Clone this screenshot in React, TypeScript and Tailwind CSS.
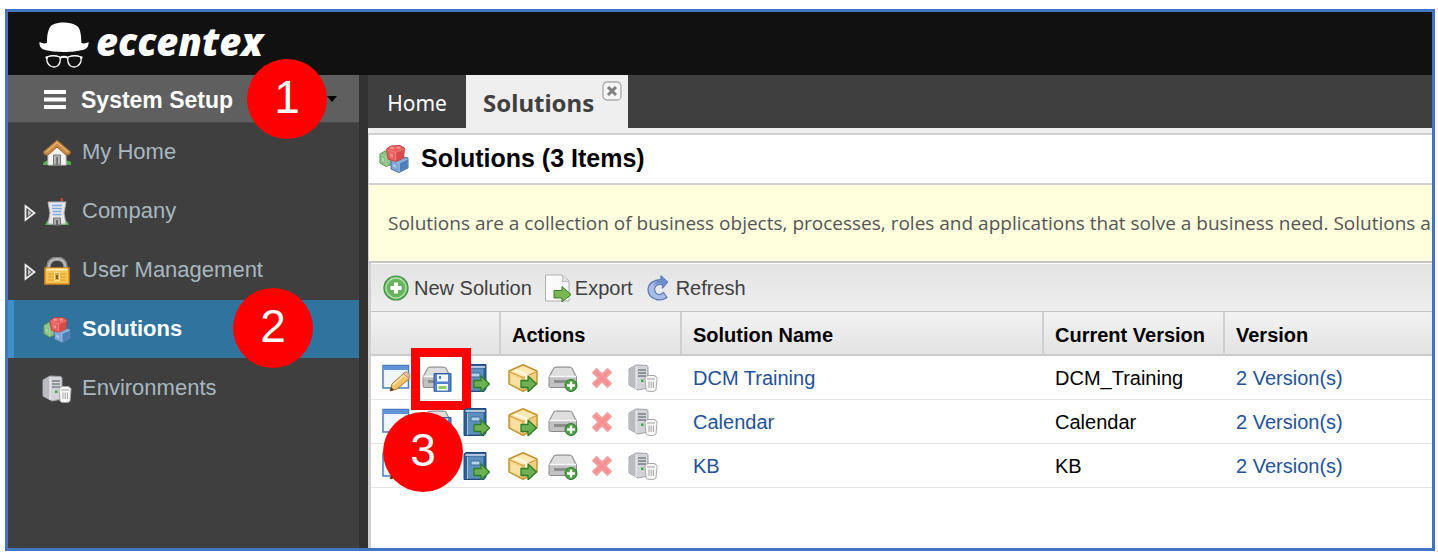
import type { ReactNode } from 'react'

interface IconProps {
  className?: string
}

function HatLogo() {
  return (
    <svg viewBox="0 0 50 48" className="h-12 w-[50px] shrink-0" aria-hidden="true">
      <path
        fill="#fff"
        d="M8 21C8 13 9 6 13 3C17 1 21 .5 25 .5S34 1 38 4C42 7 42 14 42.500 21C45 22 48 21 49.500 20C50 24 48 27 44 28C38 29 33 30 25 30S11 29 6 28C2 27 0 24 .5 20C3 21 5 22 8 21Z"
      />
      <g fill="none" stroke="#fff" strokeWidth="1.300">
        <path d="M8 35Q14 32.500 21 35Q22 41 18.500 44Q15 46 11.500 44Q7 41 8 35Z" />
        <path d="M29 35Q36 32.500 42 35Q43 41 38.500 44Q35 46 31.500 44Q28 41 29 35Z" />
        <path d="M21 36Q25 33.500 29 36M9 35.500H6.500M41 35.500H43.500" strokeWidth="2" />
      </g>
    </svg>
  )
}

function HomeIcon() {
  return (
    <svg viewBox="0 0 28 28" className="size-7 shrink-0" aria-hidden="true">
      <path d="M0 24Q4 20 9 22L10 26H0ZM18 23Q24 20 28 23V26H18Z" fill="#55ad50" />
      <path d="M5 14L14 5L23 14V26H5Z" fill="#f4f4f4" stroke="#c9c9c9" />
      <path d="M14 1L0 13L2 16L5 16L14 8L23 16H26L28 13Z" fill="#c98a45" stroke="#945f2b" />
      <path d="M3 13L14 3.500L25 13" fill="none" stroke="#e3b06e" strokeWidth="1.500" />
      <path d="M10.500 16H17.500V26H10.500Z" fill="#b3b3b3" stroke="#777" />
      <path d="M13 18H15V26H13Z" fill="#777" />
    </svg>
  )
}

function CompanyIcon() {
  return (
    <svg viewBox="0 0 28 28" className="size-7 shrink-0" aria-hidden="true">
      <path d="M2 27Q4 21 8 22L20 22Q25 22 26 27Z" fill="#55ad50" />
      <path d="M5 4H23L21 15L23 26H5L7 15Z" fill="#e8e8ea" stroke="#aeb0b6" />
      <path d="M9 7.500H19M9 10.500H19M9.500 13.500H18.500M9.500 16.500H18.500" stroke="#7fa7e8" strokeWidth="1.500" />
      <path d="M10.500 20H17.500V27H10.500Z" fill="#aaa" stroke="#777" />
      <path d="M13 22H15V27H13Z" fill="#666" />
      <path d="M18.500 4V1" stroke="#999" />
      <path d="M17.500 0H20V3H17.500Z" fill="#d63a35" />
    </svg>
  )
}

function LockIcon() {
  return (
    <svg viewBox="0 0 28 28" className="size-7 shrink-0" aria-hidden="true">
      <path d="M5.500 13V10Q6 2 14 1.500Q22 2 22.500 10V13" fill="none" stroke="#858585" strokeWidth="4.500" />
      <path d="M5.500 12V10Q6 2.500 14 2Q22 2.500 22.500 10V12" fill="none" stroke="#bcbcbc" strokeWidth="1.800" />
      <path d="M2 11H26V27H2Z" fill="#f8c554" stroke="#d98a1c" strokeWidth="1.500" />
      <path d="M3.500 12.500H24.500" stroke="#fff0b8" strokeWidth="2" />
      <path d="M5 17H11M17 17H23M5 20H11M17 20H23M5 23H11M17 23H23" stroke="#e09a28" />
      <path d="M11.500 15.500H16.500V23.500H11.500Z" fill="#e7a73a" stroke="#fbe29a" />
      <path d="M13 18H15V22H13Z" fill="#8a5b14" />
    </svg>
  )
}

function CubesIcon({ className }: IconProps) {
  return (
    <svg viewBox="0 0 30 30" className={className} aria-hidden="true">
      <path d="M1 10L6 7L14 9V20L7 22.500L1 19Z" fill="#8cc084" stroke="#5d9a58" strokeLinejoin="round" />
      <path d="M1.500 10.500L7 12.500V22" fill="none" stroke="#b4d8ae" strokeWidth=".8" />
      <path d="M3 13.500L5 14.500V18L3 17Z" fill="#b5d9b0" />
      <path d="M12 15L20 12L29 14V24L20 28.500L12 25Z" fill="#7ea6d6" stroke="#47709f" strokeLinejoin="round" />
      <path d="M20.500 19L28.500 15.500V23.500L20.500 27.800Z" fill="#4f7fb7" />
      <path d="M12.500 16L20 19L28.500 15M20.300 19V28" fill="none" stroke="#a3c1e5" strokeWidth=".8" />
      <path d="M14 20L17 21.500V24L14 22.500Z" fill="#a9c7ea" />
      <path d="M7.500 5L12 2L21 1.500L25.500 4L24.500 14L17 17.500L9 15Z" fill="#e8605f" stroke="#c4403f" strokeLinejoin="round" />
      <path d="M17 8L25 5L24 13.500L17 17Z" fill="#da4a4c" />
      <path d="M8.500 6L16.500 8.500L25 5M16.700 8.500V16.500" fill="none" stroke="#f08683" strokeWidth=".8" />
      <ellipse cx="13" cy="4" rx="2.500" ry="1.300" fill="#f58e8b" />
      <ellipse cx="19.500" cy="3.800" rx="2.500" ry="1.300" fill="#f58e8b" />
      <path d="M11 9.500L14 10.500V13.500L11.500 12.500Z" fill="#f49491" />
    </svg>
  )
}

function ServerIcon() {
  return (
    <svg viewBox="0 0 30 28" className="h-7 w-[30px] max-w-none shrink-0" aria-hidden="true">
      <path d="M1 5L8 1L19 1.500L20 3V24L10 26L1 21Z" fill="#d3d4d7" stroke="#a0a2a6" />
      <path d="M1.500 5.500L8 2L8 24.500L1.500 21Z" fill="#b9bbc0" />
      <path d="M8 2.500V25" stroke="#f3f3f3" />
      <path d="M10 6H18M10 9H18M10 12H18" stroke="#7c8089" strokeWidth="1.500" />
      <path d="M13 15.500H15.500V18H13Z" fill="#3fa447" />
      <path d="M17 14Q17 12.500 19 12.500V11.500H27V12.500Q29.500 12.500 29 14.500L28 26Q27.500 27.500 23 27.500T18 26Z" fill="#f7f7f7" stroke="#a8a8a8" />
      <path d="M19 15H27M21 17.500V24M23.200 17.500V24M25.400 17.500V24" stroke="#a3a3a3" />
    </svg>
  )
}

function ArrowBadge() {
  return (
    <path
      d="M12 16.500H19V12L27.500 20L19 28V23.500H12Z"
      fill="#6db052"
      stroke="#2f7d2c"
      strokeWidth="1.300"
      strokeLinejoin="round"
    />
  )
}

function EditIcon() {
  return (
    <svg viewBox="0 0 28 28" className="size-7" aria-hidden="true">
      <path d="M1 1.500H26.500V24H1Z" fill="#eaf3fd" stroke="#4c7cc0" strokeWidth="1.500" />
      <path d="M1.500 2H26V6H1.500Z" fill="#5f93d8" />
      <path d="M3 8H25V22.500H3Z" fill="#f0f7ff" />
      <path d="M8 27L10 20L22 9L27 12V15L15 25Z" fill="#f2c468" stroke="#a8762c" />
      <path d="M11 21L22 11L25 14" fill="none" stroke="#fde8b0" strokeWidth="1.500" />
      <path d="M21 9.500L24 7.500L28 11L26 14Z" fill="#e9b9a5" stroke="#b98567" strokeWidth=".8" />
      <path d="M8 27L9 23L12 26Z" fill="#4d3820" />
    </svg>
  )
}

function Drive({ children }: { children: ReactNode }) {
  return (
    <svg viewBox="0 0 30 28" className="h-7 w-[30px] max-w-none" aria-hidden="true">
      <path d="M6 3.500Q7 3 9 3H20Q23 3 24 4L28.500 13V22Q28.500 23.500 27 23.500H2.500Q1 23.500 1 22V13Z" fill="#c2c2c2" stroke="#8b8b8b" />
      <path d="M7 4H23L26.500 12H2.500Z" fill="#dedede" />
      <path d="M1.500 12.500H28" stroke="#f6f6f6" strokeWidth="1.500" />
      <path d="M6 16H23V19H6Z" fill="#8e8e8e" />
      {children}
    </svg>
  )
}

function SaveDriveIcon() {
  return (
    <Drive>
      <path d="M12 9.500H29V27.300H12Z" fill="#4f83cf" stroke="#2f5ca4" />
      <path d="M15 10.500H26V17.500H15Z" fill="#f4f8ff" />
      <path d="M17 12H19V15H17Z" fill="#4f83cf" />
      <path d="M15 20H26V26.500H15Z" fill="#fff" />
      <path d="M16.500 22H24.500V25H16.500Z" fill="#8bd05c" />
    </Drive>
  )
}

function AddDriveIcon() {
  return (
    <Drive>
      <circle cx="23" cy="21.500" r="6" fill="#4ba046" stroke="#2e7c2c" />
      <path d="M23 17.500V25.500M19 21.500H27" stroke="#fff" strokeWidth="2.400" />
    </Drive>
  )
}

function BookIcon() {
  return (
    <svg viewBox="0 0 28 28" className="size-7" aria-hidden="true">
      <path d="M2 2L4 .5H24V25L22 27.500H2Z" fill="#2f5f95" stroke="#234a78" />
      <path d="M5 4.500H21.500V26.500H5Z" fill="#5d90bd" />
      <path d="M3.500 3H23" stroke="#dbe8f3" strokeWidth="1.500" />
      <path d="M5.500 5V27" stroke="#9ec1dd" />
      <path d="M9 9H18V13H9Z" fill="#b6d3e8" stroke="#3d6d9f" />
      <ArrowBadge />
    </svg>
  )
}

function PackageIcon() {
  return (
    <svg viewBox="0 0 30 28" className="h-7 w-[30px] max-w-none" aria-hidden="true">
      <path d="M1 7L15 .7L29 7V20L15 27.300L1 20Z" fill="#f3cf80" stroke="#c48f2c" strokeWidth="1.400" strokeLinejoin="round" />
      <path d="M2.500 7.500L15 2.200L27.500 7.500L15 13Z" fill="#fbe8b5" />
      <path d="M2 8L15 13.500L28 8M15 13.500V26" fill="none" stroke="#d19d3c" />
      <path d="M3 10L14 15V25L3 19.500Z" fill="#f9dfa0" />
      <path d="M8 5L21 10.500V15L17 16.500V12L6 7Z" fill="#fff6da" />
      <g transform="translate(1 0)">
        <ArrowBadge />
      </g>
    </svg>
  )
}

function DeleteIcon() {
  return (
    <svg viewBox="0 0 28 28" className="size-7" aria-hidden="true">
      <path
        d="M8.500 5L14 10.500L19.500 5L23 8.500L17.500 14L23 19.500L19.500 23L14 17.500L8.500 23L5 19.500L10.500 14L5 8.500Z"
        fill="#f78f8f"
        stroke="#f5a0a0"
        strokeWidth="1.800"
        strokeLinejoin="round"
      />
    </svg>
  )
}

function AddIcon() {
  return (
    <svg viewBox="0 0 26 26" className="size-[26px]" aria-hidden="true">
      <circle cx="13" cy="13" r="12" fill="#67b560" stroke="#3e8f3b" strokeWidth="1.200" />
      <circle cx="13" cy="13" r="10" fill="none" stroke="#b0dca9" strokeWidth="1.400" />
      <path d="M13 7.500V18.500M7.500 13H18.500" stroke="#fff" strokeWidth="4" />
    </svg>
  )
}

function ExportIcon() {
  return (
    <svg viewBox="0 0 28 28" className="size-7" aria-hidden="true">
      <path d="M1.500 1H18L25 7V27H1.500Z" fill="#fafafa" stroke="#b0b0b0" strokeLinejoin="round" />
      <path d="M18 1Q20 6 18 8Q22 6 25 8" fill="#e5e5e5" stroke="#b7b7b7" />
      <path d="M10 16.500H18V12.500L27 20.500L18 28V24H10Z" fill="#79b850" stroke="#35802c" strokeLinejoin="round" />
    </svg>
  )
}

function RefreshIcon() {
  return (
    <svg viewBox="0 0 22 26" className="h-[26px] w-[22px]" aria-hidden="true">
      <path
        d="M14 1L20.500 7L15.500 13V9.500Q8.500 8.500 7.500 14Q8 20 13.500 19.500L16.500 17.500L20 22.500Q15 26 9 24.500Q1 22 1 14Q2 5.500 14 4.500Z"
        fill="#a9bde6"
        stroke="#5f7cb8"
        strokeWidth="1.300"
        strokeLinejoin="round"
      />
      <path d="M14 4.800L14.500 2L20 7L16 11V9Q10 7 6 11Q8 6 14 4.800Z" fill="#6f8dcc" />
    </svg>
  )
}

function Expander() {
  return (
    <svg viewBox="0 0 12 18" className="h-[18px] w-3" aria-hidden="true">
      <path d="M1.500 2L10.500 9L1.500 16Z" fill="#4a4a4a" stroke="#ededed" strokeWidth="1.800" />
      <path d="M4 6L7.500 9L4 12Z" fill="#c4c4c4" />
    </svg>
  )
}

function StepBadge({ step, className }: { step: number; className: string }) {
  return (
    <span
      className={`absolute z-10 flex size-20 items-center justify-center rounded-full bg-[#ff0000] pb-1 text-[46px] leading-none font-normal text-white ${className}`}
    >
      {step}
    </span>
  )
}

const navItems = [
  { label: 'My Home', icon: <HomeIcon /> },
  { label: 'Company', icon: <CompanyIcon />, expandable: true },
  { label: 'User Management', icon: <LockIcon />, expandable: true },
  { label: 'Solutions', icon: <CubesIcon className="size-7 shrink-0" />, active: true },
  { label: 'Environments', icon: <ServerIcon /> },
]

const solutions = [
  { name: 'DCM Training', current: 'DCM_Training', versions: 2 },
  { name: 'Calendar', current: 'Calendar', versions: 2 },
  { name: 'KB', current: 'KB', versions: 2 },
]

const headCell =
  'border-r-2 border-b-2 border-r-[#cfcfcf] border-b-[#c9c9c9] pt-1 pl-[11px] text-left font-bold last:border-r-0'

function Sidebar() {
  return (
    <aside className="w-[360px] shrink-0 border-r-[9px] border-[#323232] bg-[#3f3f3f]">
      <div className="relative border-b border-[#4a4a4a] bg-[#5f5f5f]">
        <button type="button" className="flex h-[47px] w-full items-center pl-9 text-[23px] font-bold text-white">
          <svg viewBox="0 0 22 20" className="mr-[15px] h-5 w-[22px]" aria-hidden="true">
            <path d="M0 3H22M0 10.500H22M0 18H22" stroke="#fff" strokeWidth="4" />
          </svg>
          <span className="pt-1">System Setup</span>
          <svg viewBox="0 0 10 6" className="mr-[22px] ml-auto h-1.5 w-2.5" aria-hidden="true">
            <path d="M0 0H10L5 6Z" fill="#000" />
          </svg>
        </button>
        <StepBadge step={1} className="-top-4 left-[239px]" />
      </div>
      <nav className="flex flex-col gap-px text-[22px]">
        {navItems.map((item) => (
          <div
            key={item.label}
            className={`relative flex h-[58px] items-center ${item.active ? 'border-l-[6px] border-[#3f8ec4] bg-[#30749e] pl-2.5' : 'pl-4'}`}
          >
            {item.expandable ? (
              <button type="button" aria-label={`Expand ${item.label}`} className="mr-1.5 w-3 pt-1">
                <Expander />
              </button>
            ) : (
              <span className="mr-1.5 w-3" />
            )}
            <a
              href="#"
              className={`flex flex-1 items-center pb-0.5 ${item.active ? 'font-bold text-white' : 'text-[#a9b7bf]'}`}
            >
              <span className="mr-2.5 flex w-[30px] justify-center pt-1">{item.icon}</span>
              {item.label}
            </a>
            {item.active && <StepBadge step={2} className="-top-3 left-[219px]" />}
          </div>
        ))}
      </nav>
    </aside>
  )
}

function Tabs() {
  return (
    <div className="flex h-[53px] bg-[#3f3f3f] font-['Noto_Sans',sans-serif]">
      <button type="button" className="w-[98px] pt-1 text-[21px] text-white">
        Home
      </button>
      <div className="relative flex w-[162px] bg-[#efefef]">
        <button type="button" className="pt-0.5 pl-[17px] text-2xl font-bold text-[#404040]">
          Solutions
        </button>
        <button type="button" aria-label="Close tab" className="absolute top-1.5 right-1.5">
          <svg viewBox="0 0 20 20" className="size-5" aria-hidden="true">
            <rect x="1" y="1" width="18" height="18" rx="4" fill="#f6f6f6" stroke="#aaa" strokeWidth="1.300" />
            <path d="M6 6L14 14M14 6L6 14" stroke="#808080" strokeWidth="3" />
          </svg>
        </button>
      </div>
    </div>
  )
}

function Toolbar() {
  return (
    <div className="flex h-12 items-center border-b border-[#c4c4c4] bg-linear-to-b from-[#e3e3e3] to-[#efefef] pl-3 text-xl text-[#404040]">
      <button type="button" className="mr-3 flex items-center gap-[5px]">
        <AddIcon />
        New Solution
      </button>
      <button type="button" className="mr-3.5 flex items-center gap-[3px]">
        <ExportIcon />
        Export
      </button>
      <button type="button" className="flex items-center gap-[7px]">
        <RefreshIcon />
        Refresh
      </button>
    </div>
  )
}

function SolutionsTable() {
  return (
    <table className="w-full table-fixed border-separate border-spacing-0 text-xl text-black">
      <colgroup>
        <col className="w-[130px]" />
        <col className="w-[181px]" />
        <col className="w-[362px]" />
        <col className="w-[181px]" />
        <col />
      </colgroup>
      <thead>
        <tr className="h-11 bg-linear-to-b from-[#f3f3f3] to-[#e2e2e2]">
          <th className={headCell} aria-label="Edit" />
          <th className={headCell}>Actions</th>
          <th className={headCell}>Solution Name</th>
          <th className={headCell}>Current Version</th>
          <th className={headCell}>Version</th>
        </tr>
      </thead>
      <tbody>
        {solutions.map((solution, i) => (
          <tr key={solution.name} className="h-11 *:border-b *:border-[#e6e6e6]">
            <td className="relative pl-[11px]">
              <div className="flex gap-3">
                <button type="button" aria-label="Edit" className="w-7"><EditIcon /></button>
                <button type="button" aria-label="Save version" className="w-7"><SaveDriveIcon /></button>
                <button type="button" aria-label="Open" className="w-7"><BookIcon /></button>
              </div>
              {i === 0 && <span className="absolute -top-2 left-10 h-[62px] w-[60px] border-[9px] border-[#ff0000]" />}
              {i === 1 && <StepBadge step={3} className="top-3 left-3" />}
            </td>
            <td className="pl-[7px]">
              <div className="flex gap-3">
                <button type="button" aria-label="Publish" className="w-7"><PackageIcon /></button>
                <button type="button" aria-label="Add version" className="w-7"><AddDriveIcon /></button>
                <button type="button" aria-label="Delete" className="w-7"><DeleteIcon /></button>
                <button type="button" aria-label="Environments" className="w-7"><ServerIcon /></button>
              </div>
            </td>
            <td className="pl-[11px]"><a href="#" className="text-[#24529a]">{solution.name}</a></td>
            <td className="pl-[11px]">{solution.current}</td>
            <td className="pl-[11px]"><a href="#" className="text-[#24529a]">{solution.versions} Version(s)</a></td>
          </tr>
        ))}
      </tbody>
    </table>
  )
}

export default function App() {
  return (
    <div className="h-screen bg-white pt-[9px] pr-[3px] pb-px pl-[5px] font-['Liberation_Sans',Arial,sans-serif]">
      <div className="flex h-full flex-col overflow-hidden border-[3px] border-[#4472c4]">
        <header className="flex h-[63px] shrink-0 items-center bg-[#111] pt-1 pl-[31px] text-white">
          <HatLogo />
          <span className="pb-2.5 pl-[7px] font-['Open_Sans',sans-serif] text-[38px] leading-none font-extrabold italic">
            eccentex
          </span>
        </header>
        <div className="flex min-h-0 flex-1">
          <Sidebar />
          <main className="min-w-0 flex-1 bg-white">
            <Tabs />
            <div className="h-[7px] border-b-2 border-[#d0d0d0] bg-[#efefef]" />
            <section className="border-l border-[#cfcfcf]">
              <h1 className="flex h-12 items-center gap-3 pl-2.5 text-[25px] font-bold text-black">
                <CubesIcon className="size-[30px]" />
                Solutions (3 Items)
              </h1>
              <p className="flex h-[80px] items-center overflow-hidden border-t-2 border-b-2 border-t-[#d2d2d2] border-b-[#c6c6c6] bg-[#ffffdd] pl-[19px] font-['Open_Sans',sans-serif] text-[19px] whitespace-nowrap text-[#555]">
                Solutions are a collection of business objects, processes, roles and applications that solve a business need. Solutions ar
              </p>
            </section>
            <section className="h-full border-l-[3px] border-[#d0d0d0]">
              <div className="border-t border-white">
                <Toolbar />
                <SolutionsTable />
              </div>
            </section>
          </main>
        </div>
      </div>
    </div>
  )
}
